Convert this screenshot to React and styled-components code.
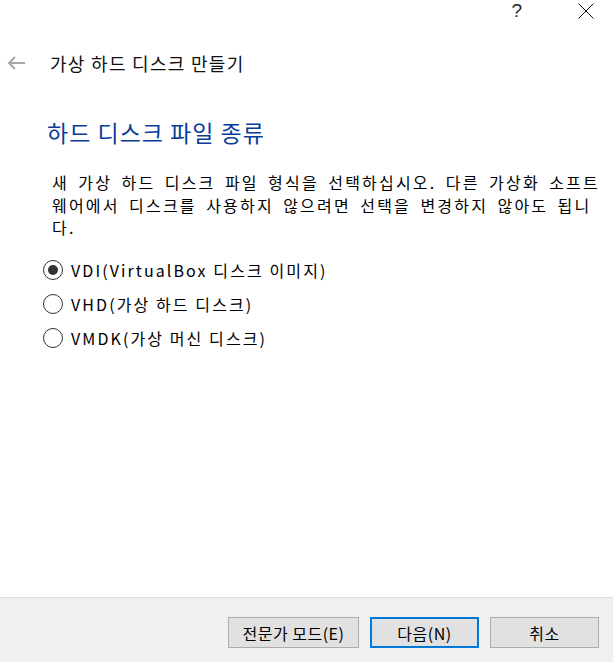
import React, {useState} from 'react'
import styled, {createGlobalStyle} from "styled-components";

const GlobalStyle = createGlobalStyle`
    html, body {
        margin: 0;
        padding: 0;
        background: #fff;
    }
    body {
        font-family: "Noto Sans CJK KR", "Noto Sans", sans-serif;
        color: #000;
    }
`;

const Window = styled.div`
    display: flex;
    flex-direction: column;
    width: 613px;
    height: 662px;
    background: #fff;
    overflow: hidden;
`;

const TitleBar = styled.div`
    display: flex;
    justify-content: flex-end;
    align-items: center;
    height: 22px;
    padding-right: 19px;
    gap: 56px;

    .help {
        font-family: "Liberation Sans", sans-serif;
        font-size: 19px;
        font-weight: 300;
        color: #222;
        line-height: 22px;
    }
`;

const Header = styled.div`
    display: flex;
    align-items: center;
    height: 24px;
    margin-top: 29px;
    padding-left: 7px;
    gap: 24px;

    .title {
        font-size: 18px;
        line-height: 24px;
        letter-spacing: 1.3px;
        color: #111;
    }
`;

const Content = styled.div`
    flex: 1;
    display: flex;
    flex-direction: column;
    padding: 42px 0 0 43px;
`;

const Heading = styled.h1`
    margin: 0 0 0 4px;
    font-size: 23px;
    font-weight: 400;
    line-height: 30px;
    letter-spacing: 1px;
    color: #0a3d99;
`;

const Description = styled.p`
    margin: 24px 0 0 9px;
    font-size: 16px;
    line-height: 22.5px;
    letter-spacing: 2.2px;
    word-spacing: 3.6px;
    white-space: nowrap;
`;

const RadioList = styled.div`
    display: flex;
    flex-direction: column;
    margin-top: 14px;
`;

const RadioRow = styled.label`
    display: flex;
    align-items: center;
    height: 34px;
    gap: 8px;
    font-size: 16px;
    letter-spacing: 2.1px;
    cursor: default;
`;

const RadioCircle = styled.span`
    position: relative;
    box-sizing: border-box;
    width: 20px;
    height: 20px;
    border-radius: 50%;
    border: 1px solid #333;
    background: #fff;
    flex-shrink: 0;

    &::after {
        content: "";
        display: ${p => p.$checked ? 'block' : 'none'};
        position: absolute;
        left: 4px;
        top: 4px;
        width: 10px;
        height: 10px;
        border-radius: 50%;
        background: #333;
    }
`;

const Footer = styled.div`
    display: flex;
    justify-content: flex-end;
    align-items: flex-start;
    height: 65px;
    box-sizing: border-box;
    padding: 19px 14px 0 0;
    gap: 11px;
    border-top: 1px solid #dfdfdf;
    background: #f0f0f0;
`;

const Button = styled.button`
    box-sizing: border-box;
    width: ${p => p.$width}px;
    height: 31px;
    padding: 0;
    font-family: "Noto Sans CJK KR", "Noto Sans", sans-serif;
    font-size: 16px;
    letter-spacing: 0.5px;
    color: #000;
    background: #e1e1e1;
    border: ${p => p.$primary ? '2px solid #0078d7' : '1px solid #adadad'};
    outline: none;
`;

const BackArrow = () => (
    <svg width="19" height="14" viewBox="0 0 19 14">
        <path d="M18 7H2M8 1L2 7l6 6" fill="none" stroke="#a6a6a6" strokeWidth="2" />
    </svg>
);

const CloseIcon = () => (
    <svg width="16" height="16" viewBox="0 0 16 16">
        <path d="M0.5 0.5l15 15M15.5 0.5l-15 15" fill="none" stroke="#111" strokeWidth="1" />
    </svg>
);

const options = [
    {key: 'vdi', label: 'VDI(VirtualBox 디스크 이미지)'},
    {key: 'vhd', label: 'VHD(가상 하드 디스크)'},
    {key: 'vmdk', label: 'VMDK(가상 머신 디스크)'},
];

const App = () => {
    let [format, setFormat] = useState('vdi');

    return (
        <Window>
            <GlobalStyle />
            <TitleBar>
                <span className="help">?</span>
                <CloseIcon />
            </TitleBar>
            <Header>
                <BackArrow />
                <span className="title">가상 하드 디스크 만들기</span>
            </Header>
            <Content>
                <Heading>하드 디스크 파일 종류</Heading>
                <Description>
                    새 가상 하드 디스크 파일 형식을 선택하십시오. 다른 가상화 소프트<br />
                    웨어에서 디스크를 사용하지 않으려면 선택을 변경하지 않아도 됩니<br />
                    다.
                </Description>
                <RadioList>
                    {options.map(opt => (
                        <RadioRow key={opt.key} onClick={() => setFormat(opt.key)}>
                            <RadioCircle $checked={format === opt.key} />
                            <span>{opt.label}</span>
                        </RadioRow>
                    ))}
                </RadioList>
            </Content>
            <Footer>
                <Button $width={131}>전문가 모드(E)</Button>
                <Button $width={109} $primary>다음(N)</Button>
                <Button $width={109}>취소</Button>
            </Footer>
        </Window>
    )
}
export default App;
